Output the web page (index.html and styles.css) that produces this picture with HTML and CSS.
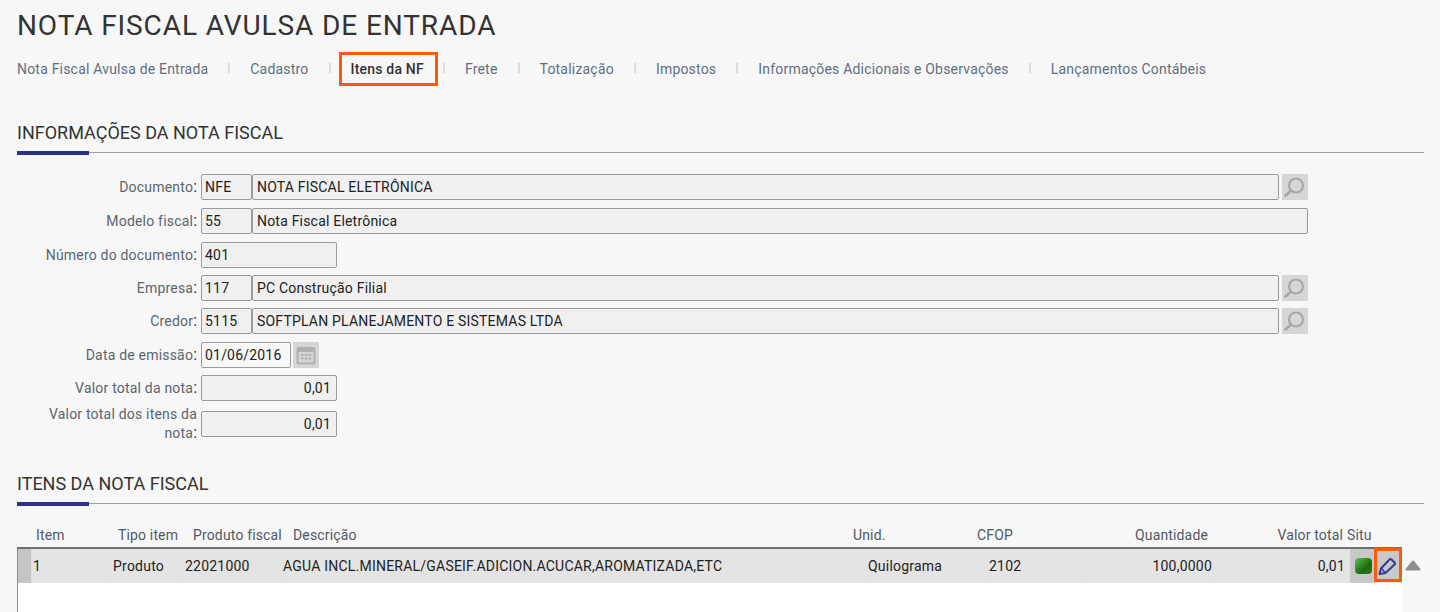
FILE: index.html
```html
<!DOCTYPE html>
<html lang="pt-BR">
<head>
<meta charset="utf-8">
<title>Nota Fiscal Avulsa de Entrada</title>
<link rel="stylesheet" href="styles.css">
</head>
<body>
<h1 class="page-title">NOTA FISCAL AVULSA DE ENTRADA</h1>
<nav class="tabs">
  <a class="tab t1">Nota Fiscal Avulsa de Entrada</a><i class="sep"></i>
  <a class="tab t2">Cadastro</a><i class="sep"></i>
  <a class="tab active">Itens da NF</a><i class="sep"></i>
  <a class="tab t4">Frete</a><i class="sep"></i>
  <a class="tab t5">Totalização</a><i class="sep"></i>
  <a class="tab t6">Impostos</a><i class="sep"></i>
  <a class="tab t7">Informações Adicionais e Observações</a><i class="sep"></i>
  <a class="tab t8">Lançamentos Contábeis</a>
</nav>

<section class="section first">
  <h2 class="section-title">INFORMAÇÕES DA NOTA FISCAL</h2>
</section>

<div class="form">
  <div class="row r1">
    <label class="lbl">Documento<b>:</b></label>
    <span class="field code">NFE</span>
    <span class="field grow">NOTA FISCAL ELETRÔNICA</span>
    <span class="btn"><svg width="24" height="24" viewBox="0 0 24 24"><circle cx="13" cy="10.500" r="7" fill="none" stroke="#a8a8a8" stroke-width="2.200"/><path d="M8 15.500 2.500 20.500" stroke="#a8a8a8" stroke-width="2.800" stroke-linecap="round"/></svg></span>
  </div>
  <div class="row r2">
    <label class="lbl">Modelo fiscal<b>:</b></label>
    <span class="field code">55</span>
    <span class="field grow wide">Nota Fiscal Eletrônica</span>
  </div>
  <div class="row r3">
    <label class="lbl">Número do documento<b>:</b></label>
    <span class="field num">401</span>
  </div>
  <div class="row r4">
    <label class="lbl">Empresa<b>:</b></label>
    <span class="field code">117</span>
    <span class="field grow">PC Construção Filial</span>
    <span class="btn"><svg width="24" height="24" viewBox="0 0 24 24"><circle cx="13" cy="10.500" r="7" fill="none" stroke="#a8a8a8" stroke-width="2.200"/><path d="M8 15.500 2.500 20.500" stroke="#a8a8a8" stroke-width="2.800" stroke-linecap="round"/></svg></span>
  </div>
  <div class="row r5">
    <label class="lbl">Credor<b>:</b></label>
    <span class="field code">5115</span>
    <span class="field grow">SOFTPLAN PLANEJAMENTO E SISTEMAS LTDA</span>
    <span class="btn"><svg width="24" height="24" viewBox="0 0 24 24"><circle cx="13" cy="10.500" r="7" fill="none" stroke="#a8a8a8" stroke-width="2.200"/><path d="M8 15.500 2.500 20.500" stroke="#a8a8a8" stroke-width="2.800" stroke-linecap="round"/></svg></span>
  </div>
  <div class="row r6">
    <label class="lbl">Data de emissão<b>:</b></label>
    <span class="field date">01/06/2016</span>
    <span class="btn cal"><svg width="22" height="22" viewBox="0 0 22 22"><rect x="2.500" y="4" width="17" height="15.500" rx="1.500" fill="#d4d4d4" stroke="#b0b0b0" stroke-width="2"/><path d="M3 6.500h16" stroke="#b0b0b0" stroke-width="3"/><path d="M6.500 2.500v3M15.500 2.500v3" stroke="#b0b0b0" stroke-width="2"/><path d="M6 11h2.500M9.800 11h2.500M13.500 11h2.500M6 14.500h2.500M9.800 14.500h2.500M13.500 14.500h2.500" stroke="#b0b0b0" stroke-width="2"/></svg></span>
  </div>
  <div class="row r7">
    <label class="lbl">Valor total da nota<b>:</b></label>
    <span class="field num right">0,01</span>
  </div>
  <div class="row r8">
    <label class="lbl two">Valor total dos itens da nota<b>:</b></label>
    <span class="field num right">0,01</span>
  </div>
</div>

<section class="section second">
  <h2 class="section-title">ITENS DA NOTA FISCAL</h2>
</section>

<div class="grid-head">
  <span>Item</span>
  <span>Tipo item</span>
  <span>Produto fiscal</span>
  <span>Descrição</span>
  <span>Unid.</span>
  <span>CFOP</span>
  <span class="tr">Quantidade</span>
  <span class="tr">Valor total</span>
  <span>Situ</span>
</div>
<div class="grid-wrap">
  <div class="grid-body">
    <div class="grid-row">
      <span class="c-bar"></span>
      <span class="c">1</span>
      <span class="c">Produto</span>
      <span class="c">22021000</span>
      <span class="c">AGUA INCL.MINERAL/GASEIF.ADICION.ACUCAR,AROMATIZADA,ETC</span>
      <span class="c">Quilograma</span>
      <span class="c">2102</span>
      <span class="c tr">100,0000</span>
      <span class="c tr c-val">0,01</span>
      <span class="c-status"><i class="led"></i></span>
      <span class="c-edit"><svg width="20" height="21" viewBox="0 0 20 21"><path d="M1.500 19 3 13.500 11.500 4.500Q12.500 3.500 13.500 4.500L16.500 7.500Q17.500 8.500 16.500 9.500L7.500 18Z" fill="none" stroke="#2f3a98" stroke-width="2" stroke-linejoin="round"/><path d="M3.500 13.500 7 17.500" stroke="#2f3a98" stroke-width="1.600"/></svg></span>
    </div>
  </div>
  <div class="scroll-side"><svg class="arrow-up" width="16" height="11" viewBox="0 0 16 11"><path d="M8 1.500 14.500 9.500H1.500Z" fill="#8f8f8f" stroke="#8f8f8f" stroke-width="2" stroke-linejoin="round"/></svg></div>
</div>
</body>
</html>
```
FILE: styles.css
```css
* { box-sizing: border-box; }
html, body { height: 100%; }
body {
  margin: 0;
  background: #f7f7f7;
  font-family: Roboto, "Liberation Sans", sans-serif;
  font-size: 14px;
  color: #333;
  overflow: hidden;
}
.page-title {
  margin: 0;
  padding: 9px 0 0 17px;
  height: 49px;
  font-size: 28px;
  line-height: 34px;
  font-weight: 400;
  letter-spacing: 0.9px;
  color: #333;
}
.tabs {
  display: flex;
  align-items: center;
  height: 38px;
  padding-left: 17px;
  margin-top: 1px;
}
.tab {
  font-size: 14px;
  letter-spacing: 0.2px;
  color: #5f6f7f;
  white-space: nowrap;
}
.sep {
  width: 2px;
  height: 10px;
  background: #dcdcdc;
  margin: -2px 20px 0;
}
.tab.active {
  color: #333;
  font-weight: 500;
  border: 3px solid #ff5a0a;
  height: 34px;
  line-height: 28px;
  padding: 0 11px 0 9px;
  margin: 0 -14px 0 -12px;
}
.tab.active + .sep { margin-left: 19px; }
.section { margin: 0 16px 0 17px; border-bottom: 1px solid #a0a0a0; position: relative; }
.section::after {
  content: "";
  position: absolute;
  left: 0;
  bottom: -3px;
  width: 72px;
  height: 4px;
  background: #2b3187;
}
.section.first { margin-top: 33px; height: 32px; }
.section.second { margin-top: 27px; height: 32px; }
.section-title {
  margin: 0;
  font-size: 18px;
  line-height: 24px;
  font-weight: 400;
  color: #333;
}
.form { margin-top: 21px; }
.row { display: flex; align-items: flex-start; height: 34px; }
.r3, .r4, .r6 { height: 33px; }
.r7 { height: 36px; }
.lbl {
  width: 197px;
  flex: none;
  text-align: right;
  color: #5a6570;
  font-size: 14px;
  letter-spacing: 0.2px;
  line-height: 26px;
  margin-right: 4px;
}
.lbl b { font-weight: 400; font-size: 16px; line-height: 1; color: #333; letter-spacing: 0; }
.lbl.two { padding-left: 40px; line-height: 19px; margin-top: -6px; }
.field {
  display: block;
  flex: none;
  height: 26px;
  line-height: 24px;
  padding: 0 3px;
  border: 1px solid #9a9a9a;
  border-radius: 2px;
  background: #f0f0f0;
  font-size: 14px;
  letter-spacing: 0.2px;
  color: #222;
  white-space: nowrap;
}
.code { width: 51px; }
.grow { width: 1027px; padding-left: 4px; }
.grow.wide { width: 1056px; }
.num { width: 136px; }
.right { text-align: right; padding-right: 5px; }
.date { width: 90px; background: #f7f7f7; }
.btn {
  flex: none;
  width: 26px;
  height: 26px;
  margin-left: 3px;
  background: #d6d6d6;
  display: flex;
  align-items: center;
  justify-content: center;
}
.btn.cal { margin-left: 2px; }
.grid-head {
  display: grid;
  grid-template-columns: 82px 75px 100px 560px 124px 90px 141px 135px 60px;
  padding-left: 36px;
  height: 43px;
  padding-top: 21px;
  font-size: 14px;
  line-height: 20px;
  letter-spacing: 0.15px;
  color: #505a64;
  white-space: nowrap;
}
.grid-head .tr { text-align: right; }
.grid-head span:nth-child(9) { padding-left: 4px; }
.grid-wrap {
  display: flex;
  margin-left: 17px;
  height: 80px;
}
.grid-body {
  width: 1385px;
  flex: none;
  background: #fff;
  border-top: 2px solid #707070;
  border-left: 1px solid #8a8a8a;
}
.grid-row {
  display: grid;
  grid-template-columns: 13px 80px 72px 98px 585px 121px 100px 126px 137px 24px 28px;
  height: 34px;
  background: #e4e4e4;
  font-size: 14px;
  letter-spacing: 0.22px;
  color: #222;
  line-height: 34px;
  white-space: nowrap;
}
.c-bar { background: #c4c4c4; }
.c { padding: 0 1px; border-left: 1px solid #e0e0e0; }
.tr { text-align: right; }
.c-val { padding-right: 5px; }
.c-status {
  background: #c8c8c8;
  display: flex;
  align-items: center;
  justify-content: center;
  padding-left: 2px;
}
.led {
  display: block;
  width: 17px;
  height: 16px;
  border-radius: 4px;
  background: linear-gradient(135deg, #6cc050 0%, #3a9a2a 30%, #1e6a10 62%, #2a7a18 100%);
}
.c-edit {
  background: #c8c8c8;
  border: 3px solid #ff5a0a;
  margin-top: -1px;
  height: 34px;
  display: flex;
  align-items: center;
  justify-content: center;
}
.scroll-side { flex: 1; padding: 13px 0 0 3px; width: 22px; }
.arrow-up { display: block; }
```
